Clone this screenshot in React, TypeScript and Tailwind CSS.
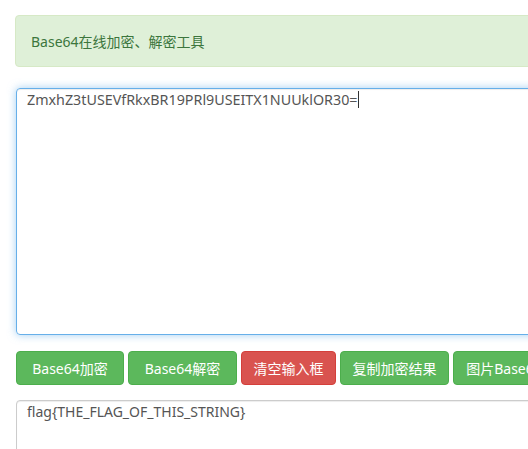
const font = { fontFamily: '"Noto Sans", "Noto Sans CJK SC", sans-serif' }

const buttons: { label: string; tone: 'green' | 'red'; w: string }[] = [
  { label: 'Base64加密', tone: 'green', w: 'w-[108px]' },
  { label: 'Base64解密', tone: 'green', w: 'w-[109px]' },
  { label: '清空输入框', tone: 'red', w: 'w-[95px]' },
  { label: '复制加密结果', tone: 'green', w: 'w-[109px]' },
  { label: '图片Base64编码', tone: 'green', w: 'w-[130px]' },
]

const App = () => {
  return (
    <div className="w-[528px] h-[449px] overflow-hidden bg-white text-[#555]" style={font}>
      <div className="w-[700px] pl-[15px] pt-[15px]">
        <div className="h-[52px] rounded border border-[#d6e9c6] bg-[#dff0d8] px-[15px] flex items-center text-[14px] text-[#3c763d]">
          Base64在线加密、解密工具
        </div>

        <div className="mt-[21px] ml-px h-[247px] rounded border border-[#66afe9] shadow-[inset_0_1px_1px_rgba(0,0,0,.075),0_0_8px_rgba(102,175,233,.6)] px-[10px] py-px text-[14.3px] leading-[20px]">
          ZmxhZ3tUSEVfRkxBR19PRl9USEITX1NUUklOR30=
          <span className="inline-block w-px h-[17px] bg-[#333] align-[-3px]" />
        </div>

        <div className="mt-[16px] ml-px flex gap-[4px]">
          {buttons.map((b, i) => (
            <div
              key={i}
              className={
                'h-[34px] shrink-0 rounded border flex items-center justify-center text-[14px] text-white ' +
                b.w +
                (b.tone === 'red' ? ' bg-[#d9534f] border-[#d43f3a]' : ' bg-[#5cb85c] border-[#4cae4c]')
              }
            >
              {b.label}
            </div>
          ))}
        </div>

        <div className="mt-[15px] ml-px h-[80px] rounded border border-[#ccc] shadow-[inset_0_1px_1px_rgba(0,0,0,.075)] px-[10px] py-px text-[14px] leading-[20px]">
          flag{'{'}THE_FLAG_OF_THIS_STRING{'}'}
        </div>
      </div>
    </div>
  )
}

export default App
